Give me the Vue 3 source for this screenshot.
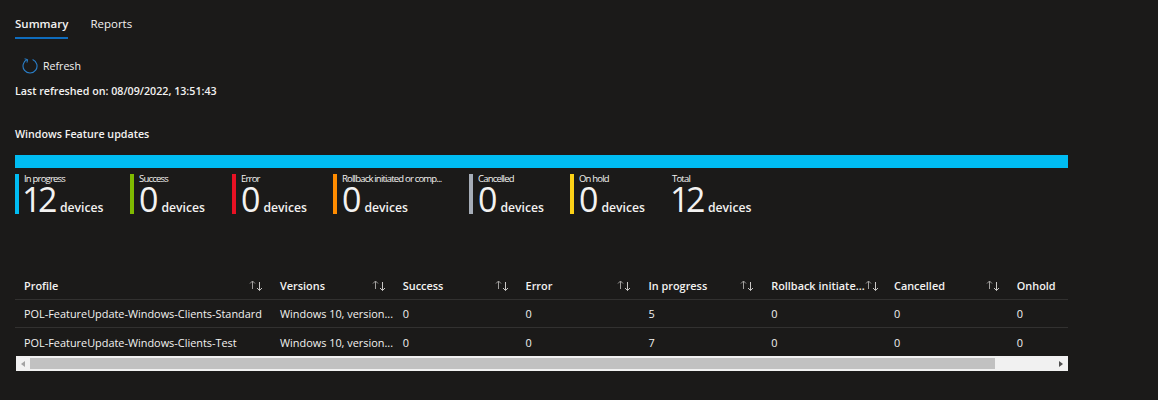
<script setup>
const legend = [
  { label: 'In progress', value: 12, color: '#00bcf2', w: 115 },
  { label: 'Success', value: 0, color: '#7fba00', w: 102 },
  { label: 'Error', value: 0, color: '#e81123', w: 101 },
  { label: 'Rollback initiated or comp...', value: 0, color: '#ff8c00', w: 136 },
  { label: 'Cancelled', value: 0, color: '#a6adb8', w: 101 },
  { label: 'On hold', value: 0, color: '#fcd116', w: 102 },
  { label: 'Total', value: 12, color: '', w: 120 }
]
const headers = ['Profile', 'Versions', 'Success', 'Error', 'In progress', 'Rollback initiate...', 'Cancelled', 'Onhold']
const rows = [
  ['POL-FeatureUpdate-Windows-Clients-Standard', 'Windows 10, version...', 0, 0, 5, 0, 0, 0],
  ['POL-FeatureUpdate-Windows-Clients-Test', 'Windows 10, version...', 0, 0, 7, 0, 0, 0]
]
</script>

<template>
  <div class="page">
    <nav class="tabs">
      <span class="tab active">Summary</span>
      <span class="tab">Reports</span>
    </nav>
    <button class="refresh">
      <svg width="16" height="16" viewBox="0 0 16 16" fill="none" stroke="#2a7fc9" stroke-width="1.1">
        <path d="M5.2 1.6A7 7 0 1 0 10.6 1.5" />
        <path d="M2.6 0.8 L5.6 1.6 L5 4.6" stroke-width="1" />
      </svg>
      <span>Refresh</span>
    </button>
    <div class="stamp">Last refreshed on: 08/09/2022, 13:51:43</div>
    <h2 class="title">Windows Feature updates</h2>
    <div class="bar"></div>
    <div class="legend">
      <div v-for="l in legend" :key="l.label" class="item" :style="{ width: l.w + 'px' }">
        <i v-if="l.color" class="swatch" :style="{ background: l.color }"></i>
        <div class="item-body">
          <div class="item-label">{{ l.label }}</div>
          <div class="item-value"><b :class="{ wide: l.value > 9 }">{{ l.value }}</b><span>devices</span></div>
        </div>
      </div>
    </div>
    <div class="table">
      <div class="row head">
        <div v-for="h in headers" :key="h" class="cell">
          <span class="head-text">{{ h }}</span>
          <svg class="sort" width="14" height="11" viewBox="0 0 14 11" fill="none" stroke-width="1">
            <path stroke="#a19f9d" d="M3.5 9V1M1 3.5 3.5 1 6 3.5" />
            <path stroke="#c8c6c4" d="M10.5 2v8.5M8 8l2.5 2.5L13 8" />
          </svg>
        </div>
      </div>
      <div v-for="(r, i) in rows" :key="i" class="row">
        <div v-for="(c, j) in r" :key="j" class="cell">{{ c }}</div>
      </div>
      <div class="scroll">
        <span class="arrow left"></span>
        <span class="thumb"></span>
        <span class="arrow right"></span>
      </div>
    </div>
  </div>
</template>

<style scoped>
.page {
  box-sizing: border-box;
  width: 1158px;
  height: 400px;
  overflow: hidden;
  padding: 0 90px 0 15px;
  background: #1b1a19;
  color: #f3f2f1;
  font-family: "Open Sans", "Noto Sans", sans-serif;
  font-size: 10.9px;
}
.tabs { display: flex; gap: 22px; height: 39px; }
.tab {
  box-sizing: border-box;
  height: 39px;
  padding-top: 15px;
  font-size: 11.5px;
  line-height: 18px;
}
.tab.active { font-weight: 600; border-bottom: 2px solid #0f6cbd; }
.refresh {
  display: flex;
  align-items: center;
  gap: 5px;
  height: 24px;
  margin-top: 15px;
  padding: 0 0 0 7px;
  border: 0;
  background: none;
  color: inherit;
  font: inherit;
  font-size: 10.6px;
}
.stamp { margin-top: 5px; font-size: 10.7px; font-weight: 600; line-height: 16px; }
.title { margin: 27px 0 0; font-size: 10.7px; font-weight: 600; line-height: 16px; }
.bar { height: 13px; margin-top: 13px; background: #00bcf2; }
.legend { display: flex; margin-top: 6px; height: 40px; }
.item { display: flex; gap: 5px; flex: none; }
.swatch { width: 4px; height: 40px; flex: none; }
.item-body { min-width: 0; }
.item-label {
  font-size: 9.5px;
  line-height: 9px;
  letter-spacing: -0.8px;
  white-space: nowrap;
}
.item-value {
  display: flex;
  align-items: baseline;
  gap: 3px;
  margin-top: 2px;
  line-height: 29px;
  white-space: nowrap;
}
.item-value b { font-size: 34px; font-weight: 400; }
.item-value b.wide { letter-spacing: -3.5px; margin-left: -2px; margin-right: 3px; }
.item-value span { font-size: 12.2px; font-weight: 600; }
.table { margin-top: 57px; overflow: hidden; }
.row {
  display: grid;
  grid-template-columns: 256px repeat(7, 122.8px);
  height: 28px;
  align-items: center;
  border-bottom: 1px solid #323130;
  box-sizing: border-box;
}
.row.head { height: 29px; }
.row:nth-child(3) { border-bottom: 0; }
.cell { display: flex; align-items: center; padding-left: 9px; white-space: nowrap; }
.head .cell { justify-content: space-between; padding-right: 8px; font-weight: 600; }
.sort { flex: none; }
.scroll {
  display: flex;
  align-items: center;
  height: 15px;
  margin-left: 1px;
  background: #f1f1f1;
}
.thumb { width: 965px; height: 11px; background: #c1c1c1; }
.arrow { width: 14px; flex: none; display: flex; justify-content: center; }
.arrow.left::before {
  content: "";
  border: 3px solid transparent;
  border-left: 0;
  border-right: 4px solid #a3a3a3;
}
.arrow.right { margin-left: auto; }
.arrow.right::before {
  content: "";
  border: 3px solid transparent;
  border-right: 0;
  border-left: 4px solid #505050;
}
</style>
